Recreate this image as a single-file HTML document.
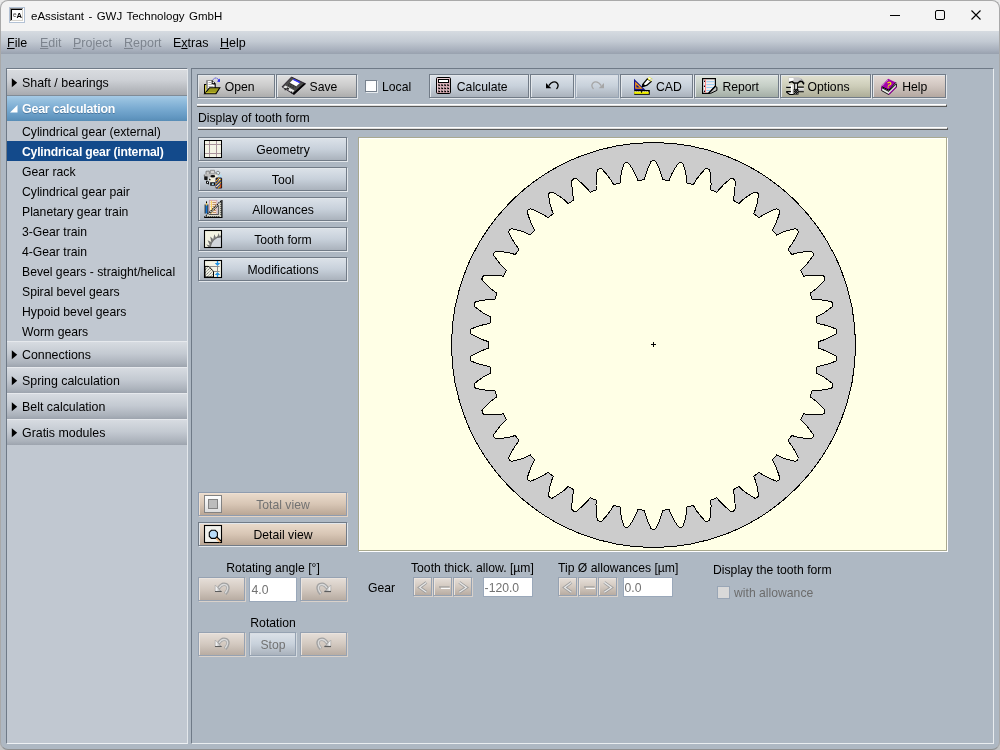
<!DOCTYPE html>
<html lang="en"><head><meta charset="utf-8"><title>eAssistant - GWJ Technology GmbH</title>
<style>
*{margin:0;padding:0;box-sizing:border-box}
html,body{width:1000px;height:750px;overflow:hidden;background:linear-gradient(#e9e9e9 0%,#e6e6e6 50%,#c4c4c4 100%)}
body{font-family:"Liberation Sans",sans-serif;font-size:12px;color:#000;position:relative;line-height:14px}
#win{will-change:transform;position:absolute;left:0;top:0;width:1000px;height:750px;border-radius:8px;overflow:hidden;background:#aeb8c3}
#winb{position:absolute;left:0;top:0;width:1000px;height:750px;border-radius:8px;border:1px solid #a9a9a9;border-bottom-color:#8f8f8f;pointer-events:none;z-index:50}
#title{position:absolute;left:0;top:0;width:1000px;height:31px;background:#f3f3f3}
#title .t{position:absolute;left:31px;top:9px;font-size:11.5px;word-spacing:1.2px;line-height:15px;white-space:nowrap;color:#000}
#menu{position:absolute;left:0;top:31px;width:1000px;height:23px;background:linear-gradient(#d6dbe1 0%,#c3cad3 45%,#a6aebb 85%,#98a1ae 100%)}
#menu span{position:absolute;top:5px;font-size:12.5px;line-height:15px;white-space:nowrap}
#menu span.d{color:#7d848e}
u{text-decoration:underline;text-underline-offset:1px}
.abs{position:absolute}
.t{position:absolute;white-space:nowrap}
#nav{position:absolute;left:6px;top:68px;width:182px;height:676px;background:#c1c8d1;border-left:1px solid #6f7a87;border-top:1px solid #6f7a87;border-right:1px solid #e3e7eb;border-bottom:1px solid #eef1f4}
.hdr{position:absolute;left:0;width:180px;background:linear-gradient(#e6e9ed 0,#e6e9ed 1px,#d7dbe1 1px,#c3c9d1 50%,#acb3bc 84%,#9da4ae 100%)}
.hdr .t{left:15px;font-size:12.4px}

.item{position:absolute;left:0;width:180px;height:20px}
.item .t{left:15px;top:4px;font-size:12.2px}
#main{position:absolute;left:191px;top:68px;width:803px;height:676px;border-left:1px solid #6f7a87;border-top:1px solid #6f7a87;border-right:1px solid #e9edf0;border-bottom:1px solid #e9edf0}
.btn{position:absolute;border:1px solid #717b87;box-shadow:1px 1px 0 #e3e7eb, inset 1px 1px 0 #e3e7eb}
.blue{background:linear-gradient(#dce2e9 0%,#c8d1db 50%,#aab2bc 100%)}
.gray{background:linear-gradient(#e1e1e1 0%,#cbcbcb 50%,#adadad 100%)}
.green{background:linear-gradient(#dde3dd 0%,#c5cec6 50%,#a4aea6 100%)}
.olive{background:linear-gradient(#e2e2d2 0%,#cdcdb9 50%,#adad98 100%)}
.pink{background:linear-gradient(#e5dcd7 0%,#d0c5bf 50%,#b4a8a1 100%)}
.tan{background:linear-gradient(#ebdccd 0%,#d8c6b5 50%,#b9a695 100%)}
.tan2{background:linear-gradient(#e6dfd9 0%,#d3c9c0 50%,#b8aca2 100%)}
.btn .t{font-size:12.2px;top:5px}
.btn.off{border-color:#95a2b2;box-shadow:1px 1px 0 #d3d9df, inset 1px 1px 0 #d9dee4}
.btn.tan.off{border-color:#8f9caf;box-shadow:1px 1px 0 #e3d3c4, inset 1px 1px 0 #eee0d2}
.btn.tan2.off{border-color:#96a2b2;box-shadow:1px 1px 0 #d9d1ca, inset 1px 1px 0 #ebe4de}
.dis{color:#727272}
.sep{position:absolute;height:3px;background:#dedede;border-top:1px solid #fff;border-bottom:1px solid #595959;border-right:1px solid #595959}
.fld{position:absolute;background:#fff;border:1px solid #9aa8ba;color:#727272}
.fld .t{left:1.5px;font-size:12.2px}
.cb{position:absolute;width:13px;height:13px}
</style></head><body>
<div id="win">
<div id="title"><svg class="abs" style="left:9px;top:7px" width="16" height="16" viewBox="0 0 16 16"><rect width="16" height="16" fill="#b3c2d5"/><rect x="1" y="1" width="14" height="14" fill="#fff"/><rect x="1" y="1" width="13" height="13" fill="#858585"/><rect x="2" y="2" width="12" height="12" fill="#d6d3cc"/><rect x="2" y="2" width="11" height="11" fill="#000"/><rect x="3" y="3" width="10" height="10" fill="#fff"/><text x="3.9" y="10.4" font-family="Liberation Sans,sans-serif" font-size="6.6" fill="#444">e</text><text x="7.4" y="10.5" font-family="Liberation Sans,sans-serif" font-size="7.6" font-weight="bold" fill="#000">A</text></svg><span class="t">eAssistant - GWJ Technology GmbH</span><svg class="abs" style="left:880px;top:0" width="120" height="31" viewBox="0 0 120 31"><g stroke="#000" stroke-width="1" fill="none"><path d="M10 15.5H20"/><rect x="55.5" y="10.5" width="9" height="9" rx="1.5"/><path d="M91.5 10.5L100.5 19.5M100.5 10.5L91.5 19.5" stroke-width="1.1"/></g></svg></div>
<div id="menu"><span style="left:7px"><u>F</u>ile</span><span class="d" style="left:40px"><u>E</u>dit</span><span class="d" style="left:73px"><u>P</u>roject</span><span class="d" style="left:124px"><u>R</u>eport</span><span style="left:173px">E<u>x</u>tras</span><span style="left:220px"><u>H</u>elp</span></div>
<div id="nav">
<div class="hdr" style="top:0px;height:27px;background:linear-gradient(#f3f4f5 0,#f3f4f5 1px,#d8dbdf 1px,#ced1d6 40%,#b6b9be 75%,#a8aaaf 96%,#808b96 96.3%,#808b96 100%)"><svg class="abs" style="left:4px;top:9px" width="8" height="10"><path d="M0.8 0.3V9.3L6.2 4.8Z" fill="#000"/></svg><span class="t" style="top:7px">Shaft / bearings</span></div>
<div class="hdr" style="top:27px;height:25px;background:linear-gradient(#a6cae5 0%,#92bddd 20%,#76a8cf 55%,#6297c1 85%,#588db6 100%)"><svg class="abs" style="left:3px;top:9px" width="8" height="8"><path d="M0 7.5L7.5 7.5L7.5 0Z" fill="#fff"/></svg><span class="t" style="top:6px;font-weight:bold;letter-spacing:-0.2px;color:#fff;text-shadow:0 1px 0 rgba(40,80,120,.5)">Gear calculation</span></div>
<div class="item" style="top:52px"><span class="t">Cylindrical gear (external)</span></div>
<div class="item" style="top:72px;background:#134a8b"><span class="t" style="font-weight:bold;letter-spacing:-0.2px;color:#fff">Cylindrical gear (internal)</span></div>
<div class="item" style="top:92px"><span class="t">Gear rack</span></div>
<div class="item" style="top:112px"><span class="t">Cylindrical gear pair</span></div>
<div class="item" style="top:132px"><span class="t">Planetary gear train</span></div>
<div class="item" style="top:152px"><span class="t">3-Gear train</span></div>
<div class="item" style="top:172px"><span class="t">4-Gear train</span></div>
<div class="item" style="top:192px"><span class="t">Bevel gears - straight/helical</span></div>
<div class="item" style="top:212px"><span class="t">Spiral bevel gears</span></div>
<div class="item" style="top:232px"><span class="t">Hypoid bevel gears</span></div>
<div class="item" style="top:252px"><span class="t">Worm gears</span></div>
<div class="hdr" style="top:272px;height:26px"><svg class="abs" style="left:4px;top:9px" width="8" height="10"><path d="M0.8 0.3V9.3L6.2 4.8Z" fill="#000"/></svg><span class="t" style="top:7px">Connections</span></div>
<div class="hdr" style="top:298px;height:26px"><svg class="abs" style="left:4px;top:9px" width="8" height="10"><path d="M0.8 0.3V9.3L6.2 4.8Z" fill="#000"/></svg><span class="t" style="top:7px">Spring calculation</span></div>
<div class="hdr" style="top:324px;height:26px"><svg class="abs" style="left:4px;top:9px" width="8" height="10"><path d="M0.8 0.3V9.3L6.2 4.8Z" fill="#000"/></svg><span class="t" style="top:7px">Belt calculation</span></div>
<div class="hdr" style="top:350px;height:26px"><svg class="abs" style="left:4px;top:9px" width="8" height="10"><path d="M0.8 0.3V9.3L6.2 4.8Z" fill="#000"/></svg><span class="t" style="top:7px">Gratis modules</span></div>
</div>
<div id="main"></div>
<div class="btn gray" style="left:197px;top:74px;width:78px;height:24px"><span class="t" style="left:26.7px">Open</span></div>
<div class="btn gray" style="left:276px;top:74px;width:81px;height:24px"><span class="t" style="left:32.6px">Save</span></div>
<div class="btn" style="left:365px;top:80px;width:12px;height:12px;background:linear-gradient(135deg,#f4f6f9 0%,#fff 40%,#fff 100%);border-color:#78828e;box-shadow:1px 1px 0 #e6eaee"></div><span class="t" style="left:382px;top:80px;font-size:12.2px">Local</span>
<div class="btn blue" style="left:429px;top:74px;width:100px;height:24px"><span class="t" style="left:26.8px">Calculate</span></div>
<div class="btn blue" style="left:530px;top:74px;width:44px;height:24px"></div>
<div class="btn blue off" style="left:575px;top:74px;width:44px;height:24px"></div>
<div class="btn blue" style="left:620px;top:74px;width:73px;height:24px"><span class="t" style="left:35px">CAD</span></div>
<div class="btn green" style="left:694px;top:74px;width:85px;height:24px"><span class="t" style="left:27.4px">Report</span></div>
<div class="btn olive" style="left:780px;top:74px;width:91px;height:24px"><span class="t" style="left:26.5px">Options</span></div>
<div class="btn pink" style="left:872px;top:74px;width:74px;height:24px"><span class="t" style="left:29.2px">Help</span></div>
<div class="sep" style="left:197px;top:104px;width:750px"></div>
<span class="t" style="left:198px;top:111px;font-size:12.2px">Display of tooth form</span>
<div class="sep" style="left:198px;top:127px;width:750px"></div>
<div class="btn blue" style="left:198px;top:137px;width:149px;height:24px"><span class="t" style="left:20px;width:128px;text-align:center">Geometry</span></div>
<div class="btn blue" style="left:198px;top:167px;width:149px;height:24px"><span class="t" style="left:20px;width:128px;text-align:center">Tool</span></div>
<div class="btn blue" style="left:198px;top:197px;width:149px;height:24px"><span class="t" style="left:20px;width:128px;text-align:center">Allowances</span></div>
<div class="btn blue" style="left:198px;top:227px;width:149px;height:24px"><span class="t" style="left:20px;width:128px;text-align:center">Tooth form</span></div>
<div class="btn blue" style="left:198px;top:257px;width:149px;height:24px"><span class="t" style="left:20px;width:128px;text-align:center">Modifications</span></div>
<div class="btn tan off" style="left:198px;top:492px;width:149px;height:24px"><span class="t dis" style="left:20px;width:128px;text-align:center">Total view</span></div>
<div class="btn tan" style="left:198px;top:522px;width:149px;height:24px"><span class="t" style="left:20px;width:128px;text-align:center">Detail view</span></div>
<div class="abs" style="left:358px;top:137px;width:589px;height:414px;border:1px solid #a9a98f;box-shadow:1px 1px 0 #fff"></div><div class="abs" style="left:359px;top:138px;width:589px;height:414px;background:#ffffe6;border-left:1px solid #fff;border-top:1px solid #fff;border-right:0;border-bottom:0;clip-path:inset(0 2px 2px 0)"></div>
<svg class="abs" style="left:0;top:0" width="1000" height="750" viewBox="0 0 1000 750" shape-rendering="crispEdges"><path fill-rule="evenodd" fill="#cccccc" stroke="#000" stroke-width="1" d="M451.5 345a202 202.5 0 1 0 404 0a202 202.5 0 1 0 -404 0Z M644.5 179.8 L644.9 177.7 L645.5 175.5 L646.1 173.4 L646.9 171.2 L647.7 169.0 L648.6 166.9 L649.6 164.7 L650.6 162.6 L651.0 161.6 L652.1 160.8 L653.5 160.5 L654.9 160.8 L656.0 161.6 L656.4 162.6 L657.4 164.7 L658.4 166.9 L659.3 169.0 L660.1 171.2 L660.9 173.4 L661.5 175.5 L662.1 177.7 L662.5 179.8 L669.2 180.3 L669.9 178.3 L670.8 176.2 L671.7 174.2 L672.8 172.1 L673.9 170.1 L675.1 168.1 L676.4 166.1 L677.8 164.2 L678.3 163.2 L679.5 162.7 L680.9 162.6 L682.3 163.1 L683.2 164.0 L683.5 165.0 L684.2 167.3 L684.8 169.6 L685.4 171.9 L685.9 174.1 L686.3 176.4 L686.6 178.6 L686.8 180.8 L686.9 183.0 L693.5 184.5 L694.5 182.6 L695.7 180.7 L696.9 178.8 L698.3 177.0 L699.7 175.1 L701.2 173.3 L702.8 171.6 L704.4 169.8 L705.0 169.0 L706.3 168.6 L707.7 168.7 L709.0 169.4 L709.8 170.5 L709.9 171.5 L710.3 173.9 L710.6 176.2 L710.8 178.6 L710.9 180.9 L711.0 183.2 L711.0 185.4 L710.9 187.6 L710.7 189.8 L716.9 192.3 L718.2 190.5 L719.6 188.8 L721.2 187.2 L722.8 185.5 L724.4 183.9 L726.2 182.4 L728.0 180.9 L729.9 179.4 L730.6 178.6 L731.9 178.4 L733.3 178.8 L734.5 179.7 L735.1 180.8 L735.0 181.9 L735.1 184.3 L735.0 186.7 L734.9 189.0 L734.7 191.3 L734.4 193.6 L734.1 195.8 L733.6 198.0 L733.1 200.1 L738.9 203.5 L740.5 201.9 L742.1 200.4 L743.9 199.0 L745.7 197.7 L747.6 196.3 L749.5 195.1 L751.6 193.8 L753.6 192.7 L754.5 192.0 L755.8 192.0 L757.2 192.6 L758.2 193.6 L758.6 194.8 L758.4 195.9 L758.0 198.3 L757.6 200.6 L757.2 202.9 L756.6 205.1 L756.0 207.3 L755.4 209.5 L754.6 211.6 L753.7 213.6 L759.0 217.8 L760.8 216.5 L762.6 215.3 L764.6 214.2 L766.6 213.1 L768.6 212.1 L770.8 211.1 L772.9 210.2 L775.2 209.3 L776.1 208.8 L777.4 209.0 L778.7 209.8 L779.5 211.0 L779.8 212.2 L779.4 213.2 L778.7 215.5 L777.9 217.8 L777.1 220.0 L776.3 222.1 L775.4 224.2 L774.4 226.2 L773.3 228.2 L772.2 230.1 L776.7 235.0 L778.7 234.0 L780.7 233.1 L782.8 232.2 L784.9 231.4 L787.1 230.7 L789.4 230.1 L791.7 229.5 L794.0 229.0 L795.0 228.7 L796.2 229.0 L797.4 230.0 L798.0 231.3 L798.1 232.6 L797.6 233.5 L796.5 235.7 L795.5 237.8 L794.4 239.8 L793.2 241.8 L792.0 243.8 L790.7 245.6 L789.3 247.4 L787.9 249.1 L791.7 254.6 L793.8 253.9 L795.9 253.3 L798.1 252.8 L800.3 252.3 L802.6 252.0 L804.9 251.7 L807.3 251.5 L809.7 251.3 L810.7 251.1 L811.9 251.7 L812.8 252.8 L813.3 254.2 L813.2 255.5 L812.5 256.3 L811.2 258.3 L809.8 260.2 L808.4 262.1 L807.0 263.9 L805.5 265.6 L803.9 267.2 L802.3 268.8 L800.7 270.2 L803.6 276.3 L805.7 275.9 L807.9 275.6 L810.2 275.4 L812.5 275.3 L814.8 275.3 L817.1 275.3 L819.5 275.5 L821.9 275.7 L822.9 275.7 L824.0 276.4 L824.8 277.6 L825.1 279.1 L824.7 280.3 L823.9 281.0 L822.3 282.8 L820.7 284.5 L819.0 286.1 L817.3 287.7 L815.6 289.2 L813.8 290.6 L812.0 291.9 L810.1 293.0 L812.1 299.5 L814.3 299.4 L816.5 299.5 L818.8 299.6 L821.1 299.8 L823.3 300.2 L825.6 300.6 L828.0 301.0 L830.3 301.6 L831.3 301.7 L832.3 302.6 L832.9 304.0 L832.9 305.4 L832.5 306.6 L831.6 307.2 L829.7 308.7 L827.8 310.2 L825.9 311.5 L824.0 312.8 L822.1 314.0 L820.1 315.1 L818.1 316.1 L816.1 317.0 L817.1 323.7 L819.3 323.9 L821.5 324.3 L823.7 324.8 L825.9 325.4 L828.1 326.0 L830.3 326.8 L832.5 327.6 L834.8 328.5 L835.8 328.8 L836.6 329.8 L837.0 331.2 L836.8 332.7 L836.2 333.8 L835.2 334.2 L833.1 335.5 L831.1 336.6 L829.0 337.7 L826.9 338.6 L824.8 339.5 L822.7 340.3 L820.6 341.0 L818.5 341.6 L818.5 348.4 L820.6 349.0 L822.7 349.7 L824.8 350.5 L826.9 351.4 L829.0 352.3 L831.1 353.4 L833.1 354.5 L835.2 355.8 L836.2 356.2 L836.8 357.3 L837.0 358.8 L836.6 360.2 L835.8 361.2 L834.8 361.5 L832.5 362.4 L830.3 363.2 L828.1 364.0 L825.9 364.6 L823.7 365.2 L821.5 365.7 L819.3 366.1 L817.1 366.3 L816.1 373.0 L818.1 373.9 L820.1 374.9 L822.1 376.0 L824.0 377.2 L825.9 378.5 L827.8 379.8 L829.7 381.3 L831.6 382.8 L832.5 383.4 L832.9 384.6 L832.9 386.0 L832.3 387.4 L831.3 388.3 L830.3 388.4 L828.0 389.0 L825.6 389.4 L823.3 389.8 L821.1 390.2 L818.8 390.4 L816.5 390.5 L814.3 390.6 L812.1 390.5 L810.1 397.0 L812.0 398.1 L813.8 399.4 L815.6 400.8 L817.3 402.3 L819.0 403.9 L820.7 405.5 L822.3 407.2 L823.9 409.0 L824.7 409.7 L825.1 410.9 L824.8 412.4 L824.0 413.6 L822.9 414.3 L821.9 414.3 L819.5 414.5 L817.1 414.7 L814.8 414.7 L812.5 414.7 L810.2 414.6 L807.9 414.4 L805.7 414.1 L803.6 413.7 L800.7 419.8 L802.3 421.2 L803.9 422.8 L805.5 424.4 L807.0 426.1 L808.4 427.9 L809.8 429.8 L811.2 431.7 L812.5 433.7 L813.2 434.5 L813.3 435.8 L812.8 437.2 L811.9 438.3 L810.7 438.9 L809.7 438.7 L807.3 438.5 L804.9 438.3 L802.6 438.0 L800.3 437.7 L798.1 437.2 L795.9 436.7 L793.8 436.1 L791.7 435.4 L787.9 440.9 L789.3 442.6 L790.7 444.4 L792.0 446.2 L793.2 448.2 L794.4 450.2 L795.5 452.2 L796.5 454.3 L797.6 456.5 L798.1 457.4 L798.0 458.7 L797.4 460.0 L796.2 461.0 L795.0 461.3 L794.0 461.0 L791.7 460.5 L789.4 459.9 L787.1 459.3 L784.9 458.6 L782.8 457.8 L780.7 456.9 L778.7 456.0 L776.7 455.0 L772.2 459.9 L773.3 461.8 L774.4 463.8 L775.4 465.8 L776.3 467.9 L777.1 470.0 L777.9 472.2 L778.7 474.5 L779.4 476.8 L779.8 477.8 L779.5 479.0 L778.7 480.2 L777.4 481.0 L776.1 481.2 L775.2 480.7 L772.9 479.8 L770.8 478.9 L768.6 477.9 L766.6 476.9 L764.6 475.8 L762.6 474.7 L760.8 473.5 L759.0 472.2 L753.7 476.4 L754.6 478.4 L755.4 480.5 L756.0 482.7 L756.6 484.9 L757.2 487.1 L757.6 489.4 L758.0 491.7 L758.4 494.1 L758.6 495.2 L758.2 496.4 L757.2 497.4 L755.8 498.0 L754.5 498.0 L753.6 497.3 L751.6 496.2 L749.5 494.9 L747.6 493.7 L745.7 492.3 L743.9 491.0 L742.1 489.6 L740.5 488.1 L738.9 486.5 L733.1 489.9 L733.6 492.0 L734.1 494.2 L734.4 496.4 L734.7 498.7 L734.9 501.0 L735.0 503.3 L735.1 505.7 L735.0 508.1 L735.1 509.2 L734.5 510.3 L733.3 511.2 L731.9 511.6 L730.6 511.4 L729.9 510.6 L728.0 509.1 L726.2 507.6 L724.4 506.1 L722.8 504.5 L721.2 502.8 L719.6 501.2 L718.2 499.5 L716.9 497.7 L710.7 500.2 L710.9 502.4 L711.0 504.6 L711.0 506.8 L710.9 509.1 L710.8 511.4 L710.6 513.8 L710.3 516.1 L709.9 518.5 L709.8 519.5 L709.0 520.6 L707.7 521.3 L706.3 521.4 L705.0 521.0 L704.4 520.2 L702.8 518.4 L701.2 516.7 L699.7 514.9 L698.3 513.0 L696.9 511.2 L695.7 509.3 L694.5 507.4 L693.5 505.5 L686.9 507.0 L686.8 509.2 L686.6 511.4 L686.3 513.6 L685.9 515.9 L685.4 518.1 L684.8 520.4 L684.2 522.7 L683.5 525.0 L683.2 526.0 L682.3 526.9 L680.9 527.4 L679.5 527.3 L678.3 526.8 L677.8 525.8 L676.4 523.9 L675.1 521.9 L673.9 519.9 L672.8 517.9 L671.7 515.8 L670.8 513.8 L669.9 511.7 L669.2 509.7 L662.5 510.2 L662.1 512.3 L661.5 514.5 L660.9 516.6 L660.1 518.8 L659.3 521.0 L658.4 523.1 L657.4 525.3 L656.4 527.4 L656.0 528.4 L654.9 529.2 L653.5 529.5 L652.1 529.2 L651.0 528.4 L650.6 527.4 L649.6 525.3 L648.6 523.1 L647.7 521.0 L646.9 518.8 L646.1 516.6 L645.5 514.5 L644.9 512.3 L644.5 510.2 L637.8 509.7 L637.1 511.7 L636.2 513.8 L635.3 515.8 L634.2 517.9 L633.1 519.9 L631.9 521.9 L630.6 523.9 L629.2 525.8 L628.7 526.8 L627.5 527.3 L626.1 527.4 L624.7 526.9 L623.8 526.0 L623.5 525.0 L622.8 522.7 L622.2 520.4 L621.6 518.1 L621.1 515.9 L620.7 513.6 L620.4 511.4 L620.2 509.2 L620.1 507.0 L613.5 505.5 L612.5 507.4 L611.3 509.3 L610.1 511.2 L608.7 513.0 L607.3 514.9 L605.8 516.7 L604.2 518.4 L602.6 520.2 L602.0 521.0 L600.7 521.4 L599.3 521.3 L598.0 520.6 L597.2 519.5 L597.1 518.5 L596.7 516.1 L596.4 513.8 L596.2 511.4 L596.1 509.1 L596.0 506.8 L596.0 504.6 L596.1 502.4 L596.3 500.2 L590.1 497.7 L588.8 499.5 L587.4 501.2 L585.8 502.8 L584.2 504.5 L582.6 506.1 L580.8 507.6 L579.0 509.1 L577.1 510.6 L576.4 511.4 L575.1 511.6 L573.7 511.2 L572.5 510.3 L571.9 509.2 L572.0 508.1 L571.9 505.7 L572.0 503.3 L572.1 501.0 L572.3 498.7 L572.6 496.4 L572.9 494.2 L573.4 492.0 L573.9 489.9 L568.1 486.5 L566.5 488.1 L564.9 489.6 L563.1 491.0 L561.3 492.3 L559.4 493.7 L557.5 494.9 L555.4 496.2 L553.4 497.3 L552.5 498.0 L551.2 498.0 L549.8 497.4 L548.8 496.4 L548.4 495.2 L548.6 494.1 L549.0 491.7 L549.4 489.4 L549.8 487.1 L550.4 484.9 L551.0 482.7 L551.6 480.5 L552.4 478.4 L553.3 476.4 L548.0 472.2 L546.2 473.5 L544.4 474.7 L542.4 475.8 L540.4 476.9 L538.4 477.9 L536.2 478.9 L534.1 479.8 L531.8 480.7 L530.9 481.2 L529.6 481.0 L528.3 480.2 L527.5 479.0 L527.2 477.8 L527.6 476.8 L528.3 474.5 L529.1 472.2 L529.9 470.0 L530.7 467.9 L531.6 465.8 L532.6 463.8 L533.7 461.8 L534.8 459.9 L530.3 455.0 L528.3 456.0 L526.3 456.9 L524.2 457.8 L522.1 458.6 L519.9 459.3 L517.6 459.9 L515.3 460.5 L513.0 461.0 L512.0 461.3 L510.8 461.0 L509.6 460.0 L509.0 458.7 L508.9 457.4 L509.4 456.5 L510.5 454.3 L511.5 452.2 L512.6 450.2 L513.8 448.2 L515.0 446.2 L516.3 444.4 L517.7 442.6 L519.1 440.9 L515.3 435.4 L513.2 436.1 L511.1 436.7 L508.9 437.2 L506.7 437.7 L504.4 438.0 L502.1 438.3 L499.7 438.5 L497.3 438.7 L496.3 438.9 L495.1 438.3 L494.2 437.2 L493.7 435.8 L493.8 434.5 L494.5 433.7 L495.8 431.7 L497.2 429.8 L498.6 427.9 L500.0 426.1 L501.5 424.4 L503.1 422.8 L504.7 421.2 L506.3 419.8 L503.4 413.7 L501.3 414.1 L499.1 414.4 L496.8 414.6 L494.5 414.7 L492.2 414.7 L489.9 414.7 L487.5 414.5 L485.1 414.3 L484.1 414.3 L483.0 413.6 L482.2 412.4 L481.9 410.9 L482.3 409.7 L483.1 409.0 L484.7 407.2 L486.3 405.5 L488.0 403.9 L489.7 402.3 L491.4 400.8 L493.2 399.4 L495.0 398.1 L496.9 397.0 L494.9 390.5 L492.7 390.6 L490.5 390.5 L488.2 390.4 L485.9 390.2 L483.7 389.8 L481.4 389.4 L479.0 389.0 L476.7 388.4 L475.7 388.3 L474.7 387.4 L474.1 386.0 L474.1 384.6 L474.5 383.4 L475.4 382.8 L477.3 381.3 L479.2 379.8 L481.1 378.5 L483.0 377.2 L484.9 376.0 L486.9 374.9 L488.9 373.9 L490.9 373.0 L489.9 366.3 L487.7 366.1 L485.5 365.7 L483.3 365.2 L481.1 364.6 L478.9 364.0 L476.7 363.2 L474.5 362.4 L472.2 361.5 L471.2 361.2 L470.4 360.2 L470.0 358.8 L470.2 357.3 L470.8 356.2 L471.8 355.8 L473.9 354.5 L475.9 353.4 L478.0 352.3 L480.1 351.4 L482.2 350.5 L484.3 349.7 L486.4 349.0 L488.5 348.4 L488.5 341.6 L486.4 341.0 L484.3 340.3 L482.2 339.5 L480.1 338.6 L478.0 337.7 L475.9 336.6 L473.9 335.5 L471.8 334.2 L470.8 333.8 L470.2 332.7 L470.0 331.2 L470.4 329.8 L471.2 328.8 L472.2 328.5 L474.5 327.6 L476.7 326.8 L478.9 326.0 L481.1 325.4 L483.3 324.8 L485.5 324.3 L487.7 323.9 L489.9 323.7 L490.9 317.0 L488.9 316.1 L486.9 315.1 L484.9 314.0 L483.0 312.8 L481.1 311.5 L479.2 310.2 L477.3 308.7 L475.4 307.2 L474.5 306.6 L474.1 305.4 L474.1 304.0 L474.7 302.6 L475.7 301.7 L476.7 301.6 L479.0 301.0 L481.4 300.6 L483.7 300.2 L485.9 299.8 L488.2 299.6 L490.5 299.5 L492.7 299.4 L494.9 299.5 L496.9 293.0 L495.0 291.9 L493.2 290.6 L491.4 289.2 L489.7 287.7 L488.0 286.1 L486.3 284.5 L484.7 282.8 L483.1 281.0 L482.3 280.3 L481.9 279.1 L482.2 277.6 L483.0 276.4 L484.1 275.7 L485.1 275.7 L487.5 275.5 L489.9 275.3 L492.2 275.3 L494.5 275.3 L496.8 275.4 L499.1 275.6 L501.3 275.9 L503.4 276.3 L506.3 270.2 L504.7 268.8 L503.1 267.2 L501.5 265.6 L500.0 263.9 L498.6 262.1 L497.2 260.2 L495.8 258.3 L494.5 256.3 L493.8 255.5 L493.7 254.2 L494.2 252.8 L495.1 251.7 L496.3 251.1 L497.3 251.3 L499.7 251.5 L502.1 251.7 L504.4 252.0 L506.7 252.3 L508.9 252.8 L511.1 253.3 L513.2 253.9 L515.3 254.6 L519.1 249.1 L517.7 247.4 L516.3 245.6 L515.0 243.8 L513.8 241.8 L512.6 239.8 L511.5 237.8 L510.5 235.7 L509.4 233.5 L508.9 232.6 L509.0 231.3 L509.6 230.0 L510.8 229.0 L512.0 228.7 L513.0 229.0 L515.3 229.5 L517.6 230.1 L519.9 230.7 L522.1 231.4 L524.2 232.2 L526.3 233.1 L528.3 234.0 L530.3 235.0 L534.8 230.1 L533.7 228.2 L532.6 226.2 L531.6 224.2 L530.7 222.1 L529.9 220.0 L529.1 217.8 L528.3 215.5 L527.6 213.2 L527.2 212.2 L527.5 211.0 L528.3 209.8 L529.6 209.0 L530.9 208.8 L531.8 209.3 L534.1 210.2 L536.2 211.1 L538.4 212.1 L540.4 213.1 L542.4 214.2 L544.4 215.3 L546.2 216.5 L548.0 217.8 L553.3 213.6 L552.4 211.6 L551.6 209.5 L551.0 207.3 L550.4 205.1 L549.8 202.9 L549.4 200.6 L549.0 198.3 L548.6 195.9 L548.4 194.8 L548.8 193.6 L549.8 192.6 L551.2 192.0 L552.5 192.0 L553.4 192.7 L555.4 193.8 L557.5 195.1 L559.4 196.3 L561.3 197.7 L563.1 199.0 L564.9 200.4 L566.5 201.9 L568.1 203.5 L573.9 200.1 L573.4 198.0 L572.9 195.8 L572.6 193.6 L572.3 191.3 L572.1 189.0 L572.0 186.7 L571.9 184.3 L572.0 181.9 L571.9 180.8 L572.5 179.7 L573.7 178.8 L575.1 178.4 L576.4 178.6 L577.1 179.4 L579.0 180.9 L580.8 182.4 L582.6 183.9 L584.2 185.5 L585.8 187.2 L587.4 188.8 L588.8 190.5 L590.1 192.3 L596.3 189.8 L596.1 187.6 L596.0 185.4 L596.0 183.2 L596.1 180.9 L596.2 178.6 L596.4 176.2 L596.7 173.9 L597.1 171.5 L597.2 170.5 L598.0 169.4 L599.3 168.7 L600.7 168.6 L602.0 169.0 L602.6 169.8 L604.2 171.6 L605.8 173.3 L607.3 175.1 L608.7 177.0 L610.1 178.8 L611.3 180.7 L612.5 182.6 L613.5 184.5 L620.1 183.0 L620.2 180.8 L620.4 178.6 L620.7 176.4 L621.1 174.1 L621.6 171.9 L622.2 169.6 L622.8 167.3 L623.5 165.0 L623.8 164.0 L624.7 163.1 L626.1 162.6 L627.5 162.7 L628.7 163.2 L629.2 164.2 L630.6 166.1 L631.9 168.1 L633.1 170.1 L634.2 172.1 L635.3 174.2 L636.2 176.2 L637.1 178.3 L637.8 180.3Z"/><path d="M651 344.5H656M653.5 342V347" stroke="#000" stroke-width="1"/></svg>
<svg class="abs" style="left:200px;top:74px" width="26" height="24" viewBox="0 0 26 24" ><path d="M6.5 6.5H12.5L15.5 9.5V15H6.5Z" fill="#fff" stroke="#8c8c8c" stroke-width="1"/><path d="M7.5 7V17" stroke="#9a9a9a"/><path d="M12.2 6.2L15.6 9.6V14.5H14.6V10.4H11.6V6.8Z" fill="#000"/><rect x="12.6" y="7.6" width="1.3" height="1.6" fill="#fff"/><path d="M8.5 8.5H11.5M8.5 10.5H13M8.5 12.5H13.5" stroke="#b4b4b4" stroke-width="1"/><path d="M4.5 10.5V19.5" stroke="#000" stroke-width="1"/><rect x="4" y="10" width="2.2" height="1" fill="#000"/><rect x="5" y="11" width="1.2" height="8.2" fill="#d8d040"/><path d="M9.6 13.7H19.8L16 19.7H4.6Z" fill="#9b991c" stroke="#000" stroke-width="1.1" stroke-linejoin="miter"/><path d="M5.6 18.6H15" stroke="#c8c030" stroke-width="0.8"/><path d="M13.2 5.6C14 3.6 17.4 3.2 18.6 6" fill="none" stroke="#2a2adf" stroke-width="1" stroke-dasharray="1.1 0.9"/><path d="M19.9 4.6V7.9L17 7.5Z" fill="#1c1cf0"/></svg>
<svg class="abs" style="left:279px;top:74px" width="30" height="24" viewBox="0 0 30 24" ><path d="M12.5 3L26.6 9.8L15 20.6L3 12.8Z" fill="#4c4c4c" stroke="#1a1020" stroke-width="0.8"/><path d="M26.6 9.8L15 20.6L13.5 19.6L25 9.2Z" fill="#000"/><path d="M14 5.6L20.8 9.1L17.3 12.3L10.8 8.7Z" fill="#fff"/><path d="M14.3 5.3L21 8.7" stroke="#3434ff" stroke-width="1.4"/><path d="M4.3 13.2L6.4 11.4L15.4 16.6L13.6 18.8Z" fill="#e8e8e8"/><path d="M8.2 13.2L10.4 14.5L9.2 16L7 14.7Z" fill="#222"/><path d="M10.6 9.6L16.6 13M9.2 10.9L15 14.2" stroke="#111" stroke-width="0.9" stroke-dasharray="1 1"/><path d="M6.2 14.3V16.2M12.6 17.6V19.2" stroke="#111" stroke-width="1.2"/></svg>
<svg class="abs" style="left:432px;top:74px" width="24" height="24" viewBox="0 0 24 24" ><rect x="4.5" y="3.5" width="14" height="16" rx="1.2" fill="#d6aab2" stroke="#000" stroke-width="1"/><path d="M5.5 4.6H17.3M5.6 4.6V18" stroke="#f0d6da" stroke-width="1" fill="none"/><rect x="6.5" y="5.5" width="10" height="3" fill="#fff" stroke="#000" stroke-width="1"/><rect x="6.3" y="10.2" width="1.7" height="1.7" fill="#000"/><rect x="7.4" y="9.799999999999999" width="0.9" height="0.9" fill="#f4e4e6"/><rect x="9.3" y="10.2" width="1.7" height="1.7" fill="#000"/><rect x="10.4" y="9.799999999999999" width="0.9" height="0.9" fill="#f4e4e6"/><rect x="12.3" y="10.2" width="1.7" height="1.7" fill="#000"/><rect x="13.4" y="9.799999999999999" width="0.9" height="0.9" fill="#f4e4e6"/><rect x="15.3" y="10.2" width="1.7" height="1.7" fill="#000"/><rect x="16.400000000000002" y="9.799999999999999" width="0.9" height="0.9" fill="#f4e4e6"/><rect x="6.3" y="13.4" width="1.7" height="1.7" fill="#000"/><rect x="7.4" y="13.0" width="0.9" height="0.9" fill="#f4e4e6"/><rect x="9.3" y="13.4" width="1.7" height="1.7" fill="#000"/><rect x="10.4" y="13.0" width="0.9" height="0.9" fill="#f4e4e6"/><rect x="12.3" y="13.4" width="1.7" height="1.7" fill="#000"/><rect x="13.4" y="13.0" width="0.9" height="0.9" fill="#f4e4e6"/><rect x="15.3" y="13.4" width="1.7" height="1.7" fill="#000"/><rect x="16.400000000000002" y="13.0" width="0.9" height="0.9" fill="#f4e4e6"/><rect x="6.3" y="16.5" width="1.7" height="1.7" fill="#000"/><rect x="7.4" y="16.1" width="0.9" height="0.9" fill="#f4e4e6"/><rect x="9.3" y="16.5" width="1.7" height="1.7" fill="#000"/><rect x="10.4" y="16.1" width="0.9" height="0.9" fill="#f4e4e6"/><rect x="12.3" y="16.5" width="1.7" height="1.7" fill="#000"/><rect x="13.4" y="16.1" width="0.9" height="0.9" fill="#f4e4e6"/><rect x="15.3" y="16.5" width="1.7" height="1.7" fill="#000"/><rect x="16.400000000000002" y="16.1" width="0.9" height="0.9" fill="#f4e4e6"/></svg>
<svg class="abs" style="left:541px;top:74px" width="24" height="24" viewBox="0 0 24 24" ><g><path d="M5 9V14.3H10.3Z" fill="#000"/><path d="M8.2 11.2C10 8.4 13.6 6.8 16 9C17.6 10.6 17.2 12.8 15.8 14.6" fill="none" stroke="#000" stroke-width="1.3" stroke-linecap="round"/></g></svg>
<svg class="abs" style="left:585px;top:74px" width="24" height="24" viewBox="0 0 24 24" ><g transform="translate(24,0) scale(-1,1)"><path d="M5 9V14.3H10.3Z" fill="#a6a6a6"/><path d="M8.2 11.2C10 8.4 13.6 6.8 16 9C17.6 10.6 17.2 12.8 15.8 14.6" fill="none" stroke="#a6a6a6" stroke-width="1.3" stroke-linecap="round"/></g></svg>
<svg class="abs" style="left:630px;top:74px" width="26" height="24" viewBox="0 0 26 24" ><path d="M4 4.8V15.9H15.4Z" fill="#12128e"/><path d="M5.2 7.6V14.8H12.8Z" fill="#ff9a12"/><path d="M6.4 10.4V13.6H9.8Z" fill="#12128e"/><rect x="4.2" y="16" width="15.6" height="4.8" fill="#000"/><rect x="4.2" y="17.6" width="14.6" height="2.3" fill="#f4f400"/><path d="M4.6 17.5H18.6" stroke="#fff" stroke-width="1" stroke-dasharray="1 1"/><path d="M11.6 17V18.8" stroke="#000" stroke-width="1"/><path d="M12.5 12.3L13.4 9.7L17.4 4.8L21.2 7.6L16.6 11.4Z" fill="#fff" stroke="#000" stroke-width="1.3" stroke-linejoin="round"/><path d="M12.1 12.7L12.9 10L15.2 11.7Z" fill="#000" stroke="#000" stroke-width="1"/><path d="M17.3 4.9L19.3 2.8L22.5 5.2L21 7.5Z" fill="#f2f224"/><path d="M18.5 3.8L21.7 6.3" stroke="#fff" stroke-width="1.3"/><path d="M19.9 6.5L22 4.4" stroke="#3030b0" stroke-width="0.9" stroke-dasharray="0.8 0.8"/></svg>
<svg class="abs" style="left:698px;top:74px" width="26" height="24" viewBox="0 0 26 24" ><path d="M4.6 4.6H17.4V12.2L10.8 19.4H4.6Z" fill="#f3ecec" stroke="#000" stroke-width="1.2"/><path d="M8.4 7.7H16.8M8.4 10.6H16.8M8.4 13.5H15.4M8.4 16.5H12.6" stroke="#96ccf2" stroke-width="1"/><path d="M5.3 7.7H6M5.3 10.6H6M5.3 13.5H6M5.3 16.5H6" stroke="#b8dcf4" stroke-width="1"/><path d="M7.5 5.2V18.8" stroke="#ff8a8a" stroke-width="1"/><rect x="6" y="6.6" width="1" height="1.4" fill="#111"/><rect x="6" y="11.6" width="1" height="1.4" fill="#111"/><rect x="6" y="16.6" width="1" height="1.4" fill="#111"/><path d="M17.4 12.6L18.9 13.2V16.4L12.6 19.4H10.8Z" fill="#c4c4c4" stroke="#000" stroke-width="1"/><path d="M17.6 12L10.6 19.2" stroke="#000" stroke-width="1.3"/></svg>
<svg class="abs" style="left:783px;top:74px" width="26" height="24" viewBox="0 0 26 24" ><defs><linearGradient id="og" x1="0" y1="0" x2="0" y2="1"><stop offset="0" stop-color="#fff"/><stop offset="1" stop-color="#a8a8a8"/></linearGradient></defs><path d="M3.2 13.3L6.4 10.7L10.5 10.2V20.5H7L3.4 17.8H7.9V13.3Z" fill="#e6e6e6"/><path d="M8.4 11V19.6" stroke="#fff" stroke-width="1.2"/><path d="M3.2 13.4H7.9M3.2 17.6H7.9" stroke="#000" stroke-width="1.2"/><path d="M3.4 18L6.6 20.5H10.8" fill="none" stroke="#000" stroke-width="1.1"/><rect x="14.8" y="13.4" width="6" height="4" fill="url(#og)"/><path d="M14.8 13.1H20.8M14.8 17.7H20.8" stroke="#000" stroke-width="1.1"/><path d="M5.5 3.3H15.4L18.8 4.6L20.8 7V9.6L19.4 7.8L17 7L14.8 8.8H11L9.2 7.4L6.2 8.4L5.5 7.4Z" fill="#c6c6c6"/><path d="M5.9 4H10.2L11 5.2L9.4 6.8L6.2 7.4Z" fill="#fff"/><path d="M17.6 4.4L20.6 7.2V8.6L18.4 6.6Z" fill="#8a8a8a"/><path d="M6 8.6L9.2 7.6L11 9.1H14.8L17 7.3L19.3 7.6L20.6 10V8.2" fill="none" stroke="#000" stroke-width="1.4" stroke-linejoin="round"/><rect x="11.7" y="9.2" width="2.7" height="6.2" fill="#f6f6f6" stroke="#000" stroke-width="1"/><rect x="10.6" y="15.2" width="4.9" height="5.4" fill="#0c0c0c"/><path d="M11.4 16.4L14.6 19.6M12.8 15.8L15.2 18.2M11 18L13.2 20.2" stroke="#dcdcdc" stroke-width="0.8" stroke-dasharray="0.9 0.9"/></svg>
<svg class="abs" style="left:876px;top:74px" width="26" height="24" viewBox="0 0 26 24" ><path d="M5.6 13.6L12.8 17.4L20.4 9.8V13L12.8 20.6L5.6 16.6Z" fill="#e6ece6" stroke="#000" stroke-width="0.9"/><path d="M12.8 20.4L20.4 12.8" stroke="#9a00a2" stroke-width="1.2"/><path d="M12.2 4.8L19.9 8.4L12.8 16.2L5 12.2Z" fill="#a200aa"/><path d="M5 12.2V16L6 16.6V13Z" fill="#8a0092"/><path d="M19.9 8.4L12.8 16.2L6 12.8" fill="none" stroke="#000" stroke-width="1"/><path d="M6.2 12L12.4 5.6" stroke="#e0c8e4" stroke-width="0.9" stroke-dasharray="0.9 0.9"/><text x="10.6" y="13.6" font-family="Liberation Sans,sans-serif" font-weight="bold" font-size="8.5" fill="#f4f000" transform="rotate(14 13 10)">?</text></svg>
<svg class="abs" style="left:200px;top:137px" width="26" height="24" viewBox="0 0 26 24" ><rect x="4.5" y="3.5" width="17" height="17" fill="#f4f4e6" stroke="#000" stroke-width="1"/><path d="M9.5 4V20M16.5 4V20M5 7.5H21M5 16.5H21" stroke="#a8939b" stroke-width="1"/></svg>
<svg class="abs" style="left:200px;top:167px" width="26" height="24" viewBox="0 0 26 24" ><path d="M6 4.3L9.2 4L9.5 7.6L6 7.8Z" fill="#cacaca" stroke="#6c6c6c" stroke-width="0.8"/><path d="M10.3 3.3H14.5L14.8 6.6H10.3Z" fill="#d4d4d4" stroke="#7c7c7c" stroke-width="0.8"/><path d="M15.4 6L18 4L19.9 5.6L18.8 7.8Z" fill="#dcecf0" stroke="#686868" stroke-width="0.8"/><path d="M4.3 7.6L9.6 6.8L15 6.4L18.6 7.4L15.4 9L8 10.4L4.3 10Z" fill="#bdbdbd"/><path d="M4.2 9.2L7.6 9.6V13.6L4.2 12.8Z" fill="#141414"/><path d="M4.3 7.6V9.4" stroke="#555" stroke-width="0.8"/><path d="M7.4 12.9L10.4 10.8L15.4 7.4L18 9L19.2 10.6L15.6 12.8L15 15.2L10.6 15.4L9.6 13.4Z" fill="#f3efdd"/><ellipse cx="12.8" cy="9.3" rx="2.4" ry="1.25" fill="#0c0c0c"/><path d="M9.2 12L10.4 13.2" stroke="#111" stroke-width="1.1"/><path d="M6 14L9 14.6V17.4L6 16.4Z" fill="#101010"/><rect x="7" y="15" width="1" height="1.1" fill="#e8f0f4"/><rect x="10.2" y="15.3" width="4.9" height="3.4" fill="#101010"/><rect x="11.8" y="16.3" width="2" height="1.7" fill="#a6d6ea"/><path d="M18 8.2L21.6 7.6L21.8 10.6H17.8Z" fill="#b6def0"/><rect x="15.6" y="10.4" width="6.3" height="11.2" rx="1.2" fill="#15153a"/><path d="M15.8 14.4L19.6 10.6M15.8 17.4L21.8 11.4M15.8 20.4L21.8 14.4M18 21.4L21.8 17.6" stroke="#f2aa18" stroke-width="1.1"/><path d="M15.8 15.9L20.8 10.9M15.8 18.9L21.8 12.9M17 20.9L21.8 16.1" stroke="#2a5cc4" stroke-width="0.9"/><path d="M16.4 20L19.8 16.6M18.6 13.4L19.9 12.1" stroke="#fff" stroke-width="1"/><path d="M20 18.8L21.8 17M20.4 20.8L21.8 19.4" stroke="#e8400e" stroke-width="1.1"/><path d="M21.6 11V21" stroke="#0a0a0a" stroke-width="0.8"/></svg>
<svg class="abs" style="left:200px;top:197px" width="26" height="24" viewBox="0 0 26 24" ><rect x="9.4" y="3.4" width="7.4" height="13.8" fill="#fbf7e4" stroke="#d4a4ac" stroke-width="0.9"/><path d="M11.4 3.8V16.8" stroke="#f6cc54" stroke-width="1"/><path d="M12.4 5.4H16M12.4 7.4H16M12.4 9.4H16M12.4 11.4H16M12.4 13.4H16M12.4 15.4H16" stroke="#b87848" stroke-width="0.9"/><path d="M10 5.4H11M10 7.4H11M10 9.4H11" stroke="#ecc8a0" stroke-width="0.9"/><rect x="5.4" y="7.8" width="2.2" height="8.6" fill="#0f74d6"/><path d="M5.1 7.4V16.6M7.9 7.4V16.6" stroke="#000" stroke-width="0.8"/><path d="M6.5 5.6V8.4" stroke="#f6cc54" stroke-width="1.3"/><path d="M6.5 4.4V6.2" stroke="#000" stroke-width="1"/><path d="M4.4 20.4H21.8V3.2ZM9.4 17.4L18.6 8.2V17.4Z" fill="#dcdcce" fill-rule="evenodd"/><path d="M4.2 20.5H21.9V3" fill="none" stroke="#000" stroke-width="1.2"/><path d="M4.4 20.2L21.7 3.1" stroke="#000" stroke-width="1.1" stroke-dasharray="1.2 1"/><path d="M9.2 17.6L18.7 8.1" stroke="#000" stroke-width="1" stroke-dasharray="1.1 1.1"/><path d="M9.6 17.5H18.6V8.6" fill="none" stroke="#333" stroke-width="0.8"/><path d="M6.8 20V19M8.8 20V19M10.8 20V19M12.8 20V19M14.8 20V19M16.8 20V19M18.8 20V19M21.4 17.6H20.4M21.4 15.6H20.4M21.4 13.6H20.4M21.4 11.6H20.4M21.4 9.6H20.4M21.4 7.6H20.4M21.4 5.6H20.4" stroke="#000" stroke-width="0.9"/><path d="M10.2 15.2L11 16M12 13.4L12.8 14.2M13.8 11.6L14.6 12.4M15.6 9.8L16.4 10.6M17.4 8L18.2 8.8" stroke="#000" stroke-width="0.8"/></svg>
<svg class="abs" style="left:200px;top:227px" width="26" height="24" viewBox="0 0 26 24" ><rect x="4.5" y="3.5" width="17" height="17" fill="#f3f3e2"/><path d="M10.6 20.2A12 12 0 0 1 21.2 9.4V20.2Z" fill="#d2d6dc"/><path d="M6.2 17.4L9.6 18.2L10.6 20H8.6ZM7.6 13.2L10.8 14.8L11.2 16.4L9.8 18.2ZM10.2 9.6L12.8 11.8L13 13.4L11.2 15ZM14.3 7.2L15.8 10.2L15.4 11.6L13.2 12.6ZM18.8 5.9L19.4 8.8L21 9.4V10.2L16.8 11Z" fill="#757575"/><path d="M10 20A12.3 12.3 0 0 1 21 9.2" fill="none" stroke="#757575" stroke-width="1.5"/><rect x="4.5" y="3.5" width="17" height="17" fill="none" stroke="#000" stroke-width="1.1"/></svg>
<svg class="abs" style="left:200px;top:257px" width="26" height="24" viewBox="0 0 26 24" ><rect x="4.5" y="3.5" width="17" height="17" fill="#f4f4e6" stroke="#000" stroke-width="1.1"/><defs><clipPath id="mc"><path d="M5 9.4H8.2C9.2 9.4 9.6 10 10.2 10.8L11.8 12.8C12.4 13.4 13.5 13.6 13.5 14.6V20H5Z"/></clipPath></defs><path d="M5 9.4H8.2C9.2 9.4 9.6 10 10.2 10.8L11.8 12.8C12.4 13.4 13.5 13.6 13.5 14.6V20H5Z" fill="#eeeee0"/><path d="M-9 21L9 3M-6 21L12 3M-3 21L15 3M0 21L18 3M3 21L21 3M6 21L24 3M9 21L27 3M12 21L30 3M15 21L33 3M18 21L36 3" clip-path="url(#mc)" stroke="#5a5a5a" stroke-width="0.9" stroke-dasharray="1.2 0.7"/><path d="M5 9.4H8.2C9.2 9.4 9.6 10 10.2 10.8L11.8 12.8C12.4 13.4 13.5 13.6 13.5 14.6V20H5Z" fill="none" stroke="#000" stroke-width="1"/><path d="M9.4 9.5H19.6M14 14.5H19.6M17.5 9.5V14.5" stroke="#8c8c8c" stroke-width="1"/><path d="M17.5 4V8" stroke="#1e90e2" stroke-width="1.3"/><path d="M14.8 6H20.2L17.5 9Z" fill="#1e90e2"/><path d="M17.5 20V16" stroke="#1e90e2" stroke-width="1.3"/><path d="M14.8 18H20.2L17.5 15Z" fill="#1e90e2"/></svg>
<svg class="abs" style="left:200px;top:492px" width="26" height="24" viewBox="0 0 26 24" ><defs><linearGradient id="tg" x1="0" y1="0" x2="0" y2="1"><stop offset="0" stop-color="#fff"/><stop offset="1" stop-color="#dcdcdc"/></linearGradient></defs><rect x="4.5" y="3.5" width="17" height="17" fill="url(#tg)" stroke="#828282" stroke-width="1"/><rect x="8.5" y="7.5" width="9" height="9" fill="#bcbcbc" stroke="#828282" stroke-width="1"/></svg>
<svg class="abs" style="left:200px;top:522px" width="26" height="24" viewBox="0 0 26 24" ><rect x="4.5" y="3.5" width="17" height="17" fill="#f1f1ec" stroke="#000" stroke-width="1.1"/><path d="M16.4 15.2L21 19.6L19.6 20.4L15.2 16.4Z" fill="#f2a860" stroke="none"/><path d="M16.6 16.4L19.6 19.4" stroke="#fff" stroke-width="0.8" stroke-dasharray="0.8 0.8"/><path d="M16.8 14.8L21 19" stroke="#000" stroke-width="1.1"/><path d="M11.4 8.3H15.2L17.4 10.4V14.2L15.2 16.4H11.4L9.3 14.2V10.4Z" fill="#b9dcf8" stroke="#000" stroke-width="1.1"/></svg>
<span class="t" style="left:198px;top:561px;width:150px;text-align:center;font-size:12.2px">Rotating angle [°]</span>
<div class="btn tan2 off" style="left:198px;top:577px;width:47px;height:24px"></div>
<div class="fld" style="left:249px;top:577px;width:48px;height:25px"><span class="t" style="top:5px">4.0</span></div>
<div class="btn tan2 off" style="left:300px;top:577px;width:47px;height:24px"></div>
<span class="t" style="left:198px;top:616px;width:150px;text-align:center;font-size:12.2px">Rotation</span>
<div class="btn tan2 off" style="left:198px;top:632px;width:47px;height:24px"></div>
<div class="btn blue off" style="left:249px;top:632px;width:47px;height:24px"><span class="t dis" style="left:0;width:46px;text-align:center">Stop</span></div>
<div class="btn tan2 off" style="left:300px;top:632px;width:47px;height:24px"></div>
<span class="t" style="left:368px;top:581px;font-size:12.2px">Gear</span>
<span class="t" style="left:411px;top:561px;font-size:12.2px">Tooth thick. allow. [µm]</span>
<div class="btn tan2 off" style="left:413px;top:577px;width:19px;height:19px"></div>
<div class="btn tan2 off" style="left:433px;top:577px;width:19px;height:19px"></div>
<div class="btn tan2 off" style="left:453px;top:577px;width:19px;height:19px"></div>
<div class="fld" style="left:483px;top:577px;width:50px;height:20px"><span class="t" style="top:3px;left:0.6px">-120.0</span></div>
<span class="t" style="left:558px;top:561px;font-size:12.2px">Tip Ø allowances [µm]</span>
<div class="btn tan2 off" style="left:558px;top:577px;width:19px;height:19px"></div>
<div class="btn tan2 off" style="left:578px;top:577px;width:19px;height:19px"></div>
<div class="btn tan2 off" style="left:598px;top:577px;width:19px;height:19px"></div>
<div class="fld" style="left:623px;top:577px;width:50px;height:20px"><span class="t" style="top:3px;left:0.6px">0.0</span></div>
<span class="t" style="left:713px;top:563px;font-size:12.2px">Display the tooth form</span>
<div class="cb" style="left:717px;top:586px;background:#d9d9d9;border:1px solid #99a6b6"></div><span class="t" style="left:734px;top:586px;font-size:12.2px;color:#6c6c6c">with allowance</span>
<svg class="abs" style="left:208px;top:577px" width="30" height="24" viewBox="0 0 30 24" ><defs><linearGradient id="rg1" x1="0" y1="0" x2="1" y2="0"><stop offset="0.15" stop-color="#f6f6f6"/><stop offset="0.8" stop-color="#a8a8a8"/></linearGradient></defs><g><path d="M10 12C12.4 8 15.4 6.4 18 7.6C21 9.2 20.6 13 17.2 16.8" fill="none" stroke="#a2a2a2" stroke-width="3.4" stroke-linecap="butt"/><path d="M11 11C12.6 8.4 15.4 6.8 18 7.9C20.4 9.2 20.2 12.6 17.2 16.2" fill="none" stroke="#dadada" stroke-width="1.4"/><path d="M7.2 8V14.6H13.6Z" fill="url(#rg1)" stroke="#a0a0a0" stroke-width="0.6"/><path d="M7 14.5H13.6" stroke="#5c5c5c" stroke-width="1.2"/></g></svg>
<svg class="abs" style="left:308px;top:577px" width="30" height="24" viewBox="0 0 30 24" ><defs><linearGradient id="rg2" x1="0" y1="0" x2="1" y2="0"><stop offset="0.15" stop-color="#f6f6f6"/><stop offset="0.8" stop-color="#a8a8a8"/></linearGradient></defs><g transform="translate(30,0) scale(-1,1)"><path d="M10 12C12.4 8 15.4 6.4 18 7.6C21 9.2 20.6 13 17.2 16.8" fill="none" stroke="#a2a2a2" stroke-width="3.4" stroke-linecap="butt"/><path d="M11 11C12.6 8.4 15.4 6.8 18 7.9C20.4 9.2 20.2 12.6 17.2 16.2" fill="none" stroke="#dadada" stroke-width="1.4"/><path d="M7.2 8V14.6H13.6Z" fill="url(#rg2)" stroke="#a0a0a0" stroke-width="0.6"/><path d="M7 14.5H13.6" stroke="#5c5c5c" stroke-width="1.2"/></g></svg>
<svg class="abs" style="left:208px;top:632px" width="30" height="24" viewBox="0 0 30 24" ><defs><linearGradient id="rg1" x1="0" y1="0" x2="1" y2="0"><stop offset="0.15" stop-color="#f6f6f6"/><stop offset="0.8" stop-color="#a8a8a8"/></linearGradient></defs><g><path d="M10 12C12.4 8 15.4 6.4 18 7.6C21 9.2 20.6 13 17.2 16.8" fill="none" stroke="#a2a2a2" stroke-width="3.4" stroke-linecap="butt"/><path d="M11 11C12.6 8.4 15.4 6.8 18 7.9C20.4 9.2 20.2 12.6 17.2 16.2" fill="none" stroke="#dadada" stroke-width="1.4"/><path d="M7.2 8V14.6H13.6Z" fill="url(#rg1)" stroke="#a0a0a0" stroke-width="0.6"/><path d="M7 14.5H13.6" stroke="#5c5c5c" stroke-width="1.2"/></g></svg>
<svg class="abs" style="left:308px;top:632px" width="30" height="24" viewBox="0 0 30 24" ><defs><linearGradient id="rg2" x1="0" y1="0" x2="1" y2="0"><stop offset="0.15" stop-color="#f6f6f6"/><stop offset="0.8" stop-color="#a8a8a8"/></linearGradient></defs><g transform="translate(30,0) scale(-1,1)"><path d="M10 12C12.4 8 15.4 6.4 18 7.6C21 9.2 20.6 13 17.2 16.8" fill="none" stroke="#a2a2a2" stroke-width="3.4" stroke-linecap="butt"/><path d="M11 11C12.6 8.4 15.4 6.8 18 7.9C20.4 9.2 20.2 12.6 17.2 16.2" fill="none" stroke="#dadada" stroke-width="1.4"/><path d="M7.2 8V14.6H13.6Z" fill="url(#rg2)" stroke="#a0a0a0" stroke-width="0.6"/><path d="M7 14.5H13.6" stroke="#5c5c5c" stroke-width="1.2"/></g></svg>
<svg class="abs" style="left:413px;top:577px" width="20" height="20" viewBox="0 0 20 20" ><path d="M13.4 5.4L6.6 10.5L13.4 15.3" fill="none" stroke="#9c9c9c" stroke-width="2.9"/><path d="M13.4 5.4L6.6 10.5L13.4 15.3" fill="none" stroke="#e6e6e6" stroke-width="1.3"/></svg>
<svg class="abs" style="left:433px;top:577px" width="20" height="20" viewBox="0 0 20 20" ><rect x="6" y="9.4" width="10.6" height="1.2" fill="#999"/><rect x="8" y="10.8" width="9" height="1.1" fill="#fff"/></svg>
<svg class="abs" style="left:453px;top:577px" width="20" height="20" viewBox="0 0 20 20" ><path d="M6.3 5.4L13.4 10.5L6.3 15.3" fill="none" stroke="#9c9c9c" stroke-width="2.9"/><path d="M6.3 5.4L13.4 10.5L6.3 15.3" fill="none" stroke="#e6e6e6" stroke-width="1.3"/></svg>
<svg class="abs" style="left:558px;top:577px" width="20" height="20" viewBox="0 0 20 20" ><path d="M13.4 5.4L6.6 10.5L13.4 15.3" fill="none" stroke="#9c9c9c" stroke-width="2.9"/><path d="M13.4 5.4L6.6 10.5L13.4 15.3" fill="none" stroke="#e6e6e6" stroke-width="1.3"/></svg>
<svg class="abs" style="left:578px;top:577px" width="20" height="20" viewBox="0 0 20 20" ><rect x="6" y="9.4" width="10.6" height="1.2" fill="#999"/><rect x="8" y="10.8" width="9" height="1.1" fill="#fff"/></svg>
<svg class="abs" style="left:598px;top:577px" width="20" height="20" viewBox="0 0 20 20" ><path d="M6.3 5.4L13.4 10.5L6.3 15.3" fill="none" stroke="#9c9c9c" stroke-width="2.9"/><path d="M6.3 5.4L13.4 10.5L6.3 15.3" fill="none" stroke="#e6e6e6" stroke-width="1.3"/></svg>
</div>
<div id="winb"></div>
</body></html>
